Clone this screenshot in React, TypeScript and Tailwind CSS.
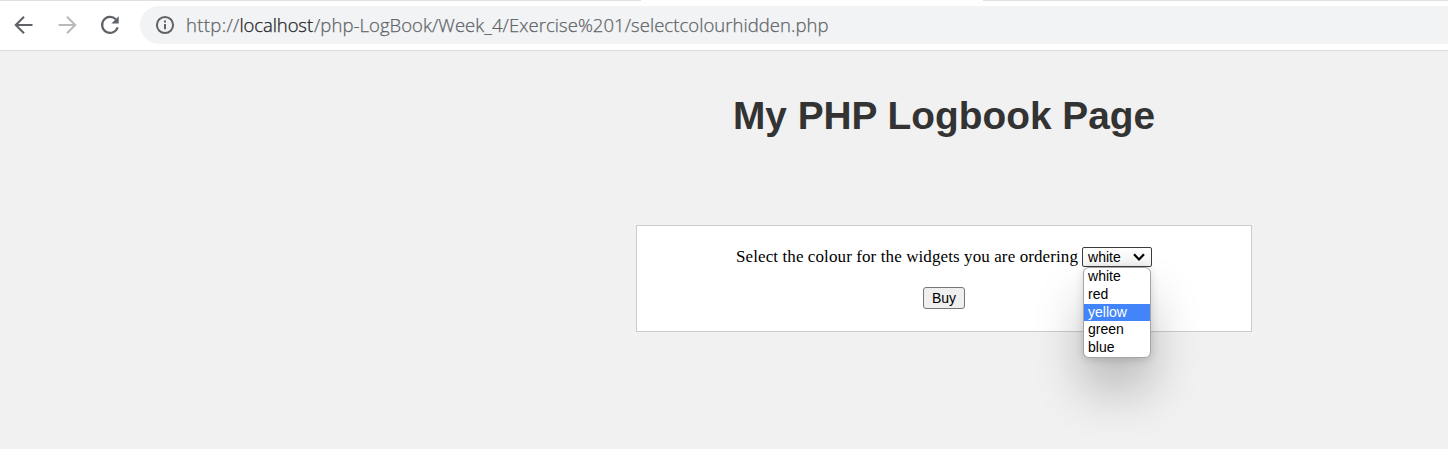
const options = ['white', 'red', 'yellow', 'green', 'blue'];

function Toolbar() {
  return (
    <header className="relative flex h-[51px] items-start border-b border-[#dadce0] bg-white pt-[6px]">
      <div className="absolute inset-x-0 top-0 flex h-px justify-between">
        <div className="w-[641px] bg-[#dee1e3]" />
        <div className="w-[465px] bg-[#dee1e3]" />
      </div>
      <div className="flex h-[38px] w-[140px] shrink-0 items-center text-[#5f6368]">
        <svg className="ml-[12px] shrink-0" width="24" height="24" viewBox="0 0 24 24" fill="none" stroke="currentColor" strokeWidth="2.1">
          <path d="M20.5 12H4M12 3.8 3.8 12l8.200 8.200" />
        </svg>
        <svg className="ml-[19px] shrink-0 text-[#bababc]" width="24" height="24" viewBox="0 0 24 24" fill="none" stroke="currentColor" strokeWidth="2.1">
          <path d="M3.500 12H20M12 3.800 20.200 12 12 20.200" />
        </svg>
        <svg className="ml-[18px] shrink-0" width="26" height="26" viewBox="0 0 26 26">
          <path d="M18.800 7.200A8 8 0 1 0 20.700 15.400" fill="none" stroke="currentColor" strokeWidth="2.200" />
          <path d="M21.700 4.200V11.500H14.400Z" fill="currentColor" />
        </svg>
      </div>
      <div className="flex h-[38px] flex-1 items-center rounded-l-full bg-[#f1f3f4] pl-[15px] text-[#5f6368]">
        <svg width="20" height="20" viewBox="0 0 20 20" className="shrink-0">
          <circle cx="10" cy="10" r="8.100" fill="none" stroke="currentColor" strokeWidth="2" />
          <path d="M10 9v5.200M10 5.600v2" stroke="currentColor" strokeWidth="2" />
        </svg>
        <div className="ml-[11px] whitespace-nowrap font-['Open_Sans',sans-serif] text-[18.500px] leading-6 font-light text-[#5f6368] [-webkit-text-stroke:0.250px_currentColor]">
          <span className="inline-block w-[53.500px] tracking-[0.350px]">http://</span>
          <span className="inline-block w-[74.500px] tracking-[-0.100px] text-[#202124]">localhost</span>
          <span className="tracking-[0.050px]">/php-LogBook/Week_4/Exercise%201/selectcolourhidden.php</span>
        </div>
      </div>
    </header>
  );
}

function ColourSelect() {
  return (
    <div className="relative ml-[4px] h-[20px] w-[70px] font-['Liberation_Sans',sans-serif] text-[14px] text-black">
      <div className="flex h-[20px] items-center justify-between rounded-[2px] border border-[#3c3c3c] bg-linear-to-b from-white to-[#f3f3f3] pr-[5px] pl-[5px] leading-[18px]">
        <span>white</span>
        <svg width="14" height="10" viewBox="0 0 14 10" fill="none" stroke="black" strokeWidth="2.200">
          <path d="M2 2.200 7 7.400 12 2.200" />
        </svg>
      </div>
      <ul className="absolute top-[20px] left-px h-[91px] w-[68px] overflow-hidden rounded-[6px] border border-[#a5a5a5] bg-white shadow-[0_32px_50px_0px_rgba(0,0,0,0.24),0_2px_8px_rgba(0,0,0,0.14)]">
        {options.map((option) => (
          <li
            key={option}
            className={
              option === 'yellow'
                ? 'h-[17px] bg-[#4285fa] pl-[4px] leading-[17px] text-white'
                : 'h-[18px] pl-[4px] leading-[17px]'
            }
          >
            {option}
          </li>
        ))}
      </ul>
    </div>
  );
}

export default function App() {
  return (
    <div className="h-[449px] overflow-hidden bg-[#f1f1f1]">
      <Toolbar />
      <main className="ml-[440px] flex flex-col items-center">
        <h1 className="mt-[42px] font-['Liberation_Sans',sans-serif] text-[38.850px] leading-[46px] font-bold whitespace-nowrap text-[#333333]">
          My PHP Logbook Page
        </h1>
        <form className="mt-[86px] flex h-[107px] w-[616px] flex-col items-center border border-[#cccccc] bg-white pt-[21px]">
          <div className="flex h-[20px] items-center font-['Liberation_Serif',serif] text-[17px] whitespace-nowrap text-black">
            <span className="tracking-[0.100px]">Select the colour for the widgets you are ordering</span>
            <ColourSelect />
          </div>
          <button
            type="button"
            className="mt-[20px] h-[22px] w-[42px] rounded-[3px] border border-[#767676] bg-[#efefef] font-['Liberation_Sans',sans-serif] text-[14px] leading-[20px] text-black"
          >
            Buy
          </button>
        </form>
      </main>
    </div>
  );
}
